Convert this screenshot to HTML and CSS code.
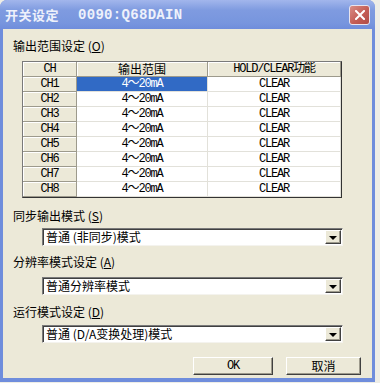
FILE: index.html
```html
<!DOCTYPE html>
<html lang="zh">
<head>
  <meta charset="UTF-8" />
  <title>开关设定</title>
  <link rel="stylesheet" href="styles.css">
</head>
<body>
  <div class="window">
    <div class="titlebar">
      <span class="title-cn">开关设定</span>
      <span class="title-id">0090:Q68DAIN</span>
      <button class="close" aria-label="关闭">
        <svg width="10" height="10" viewBox="0 0 10 10">
          <path d="M1 1L9 9M9 1L1 9" stroke="#fff" stroke-width="2" stroke-linecap="square"/>
        </svg>
      </button>
    </div>

    <div class="client">
      <div class="label">输出范围设定 (<u>O</u>)</div>

      <div class="grid">
        <table>
          <colgroup>
            <col style="width: 54px">
            <col style="width: 131px">
            <col style="width: 133px">
          </colgroup>
          <tr class="head">
            <th><span class="mono">CH</span></th>
            <th>输出范围</th>
            <th><span class="mono">HOLD/CLEAR功能</span></th>
          </tr>
          <tr><td class="ch"><span class="mono">CH1</span></td><td class="sel"><span class="mono">4～20mA</span></td><td><span class="mono">CLEAR</span></td></tr>
          <tr><td class="ch"><span class="mono">CH2</span></td><td><span class="mono">4～20mA</span></td><td><span class="mono">CLEAR</span></td></tr>
          <tr><td class="ch"><span class="mono">CH3</span></td><td><span class="mono">4～20mA</span></td><td><span class="mono">CLEAR</span></td></tr>
          <tr><td class="ch"><span class="mono">CH4</span></td><td><span class="mono">4～20mA</span></td><td><span class="mono">CLEAR</span></td></tr>
          <tr><td class="ch"><span class="mono">CH5</span></td><td><span class="mono">4～20mA</span></td><td><span class="mono">CLEAR</span></td></tr>
          <tr><td class="ch"><span class="mono">CH6</span></td><td><span class="mono">4～20mA</span></td><td><span class="mono">CLEAR</span></td></tr>
          <tr><td class="ch"><span class="mono">CH7</span></td><td><span class="mono">4～20mA</span></td><td><span class="mono">CLEAR</span></td></tr>
          <tr><td class="ch"><span class="mono">CH8</span></td><td><span class="mono">4～20mA</span></td><td><span class="mono">CLEAR</span></td></tr>
        </table>
      </div>

      <div class="label gap-s">同步输出模式 (<u>S</u>)</div>
      <div class="combo c1">
        <span class="combo-text">普通 (非同步)模式</span>
        <span class="drop"><i></i></span>
      </div>

      <div class="label gap-a">分辨率模式设定 (<u>A</u>)</div>
      <div class="combo c2">
        <span class="combo-text">普通分辨率模式</span>
        <span class="drop"><i></i></span>
      </div>

      <div class="label gap-d">运行模式设定 (<u>D</u>)</div>
      <div class="combo c3">
        <span class="combo-text">普通 (D/A变换处理)模式</span>
        <span class="drop"><i></i></span>
      </div>

      <div class="buttons">
        <button class="btn ok"><span class="mono">OK</span></button>
        <button class="btn cancel">取消</button>
      </div>
    </div>
  </div>
</body>
</html>
```

FILE: styles.css
```css
body {
  margin: 0;
  background: #eeede6;
  font-family: "Noto Sans CJK SC", sans-serif;
  font-size: 12px;
  color: #000;
}

.window {
  width: 375px;
  height: 382px;
  box-sizing: border-box;
  padding: 0 3px 4px 3px;
  background: #6f8ddc;
  border-radius: 7px 7px 0 0;
  display: flex;
  flex-direction: column;
}

/* title bar */
.titlebar {
  height: 29px;
  flex: none;
  display: flex;
  align-items: center;
  padding-left: 5px;
  margin: 0 -3px;
  border-radius: 7px 7px 0 0;
  background: linear-gradient(#a2b6ec, #7f9be0 35%, #7795de 80%, #6f8ddc);
  color: #eef1fb;
  font-weight: bold;
}

.title-cn {
  font-size: 13px;
  letter-spacing: 0.5px;
}

.title-id {
  font-family: "Liberation Mono", monospace;
  font-size: 14px;
  letter-spacing: 0.3px;
  margin-left: 19px;
}

.close {
  margin-left: auto;
  margin-right: 5px;
  width: 21px;
  height: 20px;
  padding: 0;
  border: 1px solid #e8e4ee;
  border-radius: 3px;
  background: linear-gradient(135deg, #d88d86, #c45d55 55%, #b04c48);
  display: flex;
  align-items: center;
  justify-content: center;
}

/* client area */
.client {
  flex: 1;
  background: #ece9d8;
  padding: 0 10px;
  display: flex;
  flex-direction: column;
}

.label {
  height: 14px;
  line-height: 14px;
  margin-top: 10px;
  white-space: nowrap;
}

.mono {
  font-family: "Liberation Mono", "Noto Sans CJK SC", monospace;
  font-size: 12px;
  letter-spacing: -1.2px;
  line-height: 14px;
  vertical-align: top;
}

/* grid */
.grid {
  margin: 8px 0 0 9px;
  width: 320px;
  height: 137px;
  box-sizing: border-box;
  border: 1px solid #333;
  border-top-color: #7a7a7a;
  border-left-color: #7a7a7a;
  background: #fff;
  overflow: hidden;
}

.grid table {
  border-collapse: separate;
  border-spacing: 0;
  table-layout: fixed;
  width: 318px;
}

.grid tr {
  height: 15px;
}

.grid th,
.grid td {
  padding: 0;
  height: 14px;
  line-height: 14px;
  text-align: center;
  vertical-align: top;
  font-weight: normal;
  white-space: nowrap;
}

.grid th,
.grid td.ch {
  background: #ece9d8;
  border-right: 1px solid #9d9a8c;
  border-bottom: 1px solid #9d9a8c;
  box-shadow: inset 1px 1px #fff;
}

.grid td {
  border-right: 1px solid #e2e1da;
  border-bottom: 1px solid #e2e1da;
}

.grid td.sel {
  background: #316ac5;
  color: #fff;
}

/* combo boxes */
.combo {
  margin-left: 29px;
  width: 301px;
  height: 18px;
  box-sizing: border-box;
  border: 1px solid #f4f3ee;
  border-top-color: #7a7a7a;
  border-left-color: #7a7a7a;
  box-shadow: inset 1px 1px #404040;
  background: #fff;
  display: flex;
  align-items: center;
  padding: 0 1px 0 3px;
}

.c1 { margin-top: 5px; }
.c2 { margin-top: 8px; }
.c3 { margin-top: 6px; }
.gap-s { margin-top: 11px; }
.gap-a { margin-top: 9px; }
.gap-d { margin-top: 10px; }

.combo-text {
  flex: 1;
  height: 14px;
  line-height: 14px;
  white-space: nowrap;
}

.drop {
  width: 16px;
  height: 14px;
  box-sizing: border-box;
  background: #ece9d8;
  border: 1px solid #404040;
  border-top-color: #fff;
  border-left-color: #fff;
  box-shadow: inset -1px -1px #9d9a8c;
  display: flex;
  align-items: center;
  justify-content: center;
}

.drop i {
  width: 0;
  height: 0;
  border-left: 4px solid transparent;
  border-right: 4px solid transparent;
  border-top: 4px solid #000;
  margin-top: 1px;
}

/* buttons */
.buttons {
  margin-top: 14px;
  display: flex;
  justify-content: flex-end;
  gap: 13px;
  padding-right: 1px;
}

.btn {
  height: 18px;
  padding: 0;
  font-family: "Noto Sans CJK SC", sans-serif;
  font-size: 12px;
  line-height: 14px;
  background: #ece9d8;
  border: 1px solid #404040;
  border-top-color: #fff;
  border-left-color: #fff;
  box-shadow: inset -1px -1px #9d9a8c;
  color: #000;
}

.ok { width: 80px; }
.cancel { width: 75px; }
```
